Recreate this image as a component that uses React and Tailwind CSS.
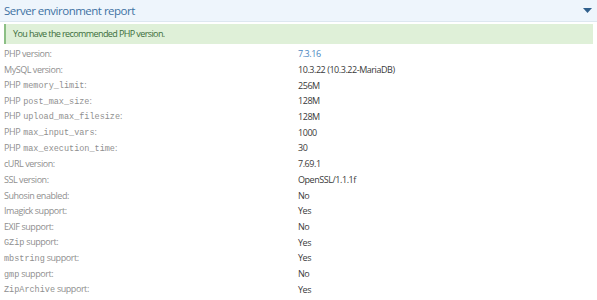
const rows = [
  { label: ['PHP ', null, 'version:'], value: '7.3.16', blue: true },
  { label: ['MySQL version:'], value: '10.3.22 (10.3.22-MariaDB)' },
  { label: ['PHP', 'memory_limit', ':'], value: '256M' },
  { label: ['PHP', 'post_max_size', ':'], value: '128M' },
  { label: ['PHP', 'upload_max_filesize', ':'], value: '128M' },
  { label: ['PHP', 'max_input_vars', ':'], value: '1000' },
  { label: ['PHP', 'max_execution_time', ':'], value: '30' },
  { label: ['cURL version:'], value: '7.69.1' },
  { label: ['SSL version:'], value: 'OpenSSL/1.1.1f' },
  { label: ['Suhosin enabled:'], value: 'No' },
  { label: ['Imagick support:'], value: 'Yes' },
  { label: ['EXIF support:'], value: 'No' },
  { label: [null, 'GZip', ' support:'], value: 'Yes' },
  { label: [null, 'mbstring', ' support:'], value: 'Yes' },
  { label: [null, 'gmp', ' support:'], value: 'No' },
  { label: [null, 'ZipArchive', ' support:'], value: 'Yes' },
]

function Label({ parts }) {
  if (parts.length === 1) return <span>{parts[0]}</span>
  const [pre, code, post] = parts
  return (
    <span>
      {pre}
      {code && (
        <code className={`font-['Liberation_Mono',monospace] text-[8.5px] tracking-normal ${pre ? 'ml-[3px]' : ''}`}>
          {code}
        </code>
      )}
      {post}
    </span>
  )
}

export default function App() {
  return (
    <div className="w-[597px] h-[300px] bg-white overflow-hidden font-['Open_Sans',sans-serif]">
      <div className="h-[22px] bg-[#eef5fc] border-b border-[#dde7f0] flex items-center justify-between pl-[4px] pr-[4px]">
        <span className="text-[11.5px] tracking-[-0.5px] text-[#3e72a3]">Server environment report</span>
        <svg width="9" height="6" viewBox="0 0 9 6" className="mr-[1px]">
          <path d="M0 0h9L4.5 5z" fill="#2f5f8c" />
        </svg>
      </div>
      <div className="mx-[4px] mt-[2px] h-[20px] bg-[#dff0d8] border-l-2 border-[#8cbf85] flex items-center pl-[7px] text-[9px] tracking-[-0.6px] text-[#3c6e3c]">
        You have the recommended PHP version.
      </div>
      <div className="pt-[2px] text-[9px] tracking-[-0.45px]">
        {rows.map((r, i) => (
          <div key={i} className="flex items-center h-[15.73px]">
            <div className="w-[298px] pl-[4px] text-[#8f8f8f] whitespace-nowrap">
              <Label parts={r.label} />
            </div>
            <div className={r.blue ? 'text-[#4a86c0]' : 'text-[#3a3a3a]'}>{r.value}</div>
          </div>
        ))}
      </div>
    </div>
  )
}
